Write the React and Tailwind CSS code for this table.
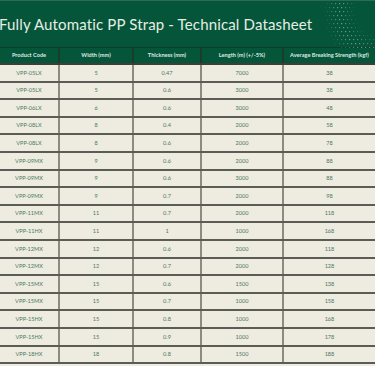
const rows = [
  ['VPP-05LX', '5', '0.47', '7000', '38'],
  ['VPP-05LX', '5', '0.6', '3000', '38'],
  ['VPP-06LX', '6', '0.6', '3000', '48'],
  ['VPP-08LX', '8', '0.4', '2000', '58'],
  ['VPP-08LX', '8', '0.6', '2000', '78'],
  ['VPP-09MX', '9', '0.6', '2000', '88'],
  ['VPP-09MX', '9', '0.6', '3000', '88'],
  ['VPP-09MX', '9', '0.7', '2000', '98'],
  ['VPP-11MX', '11', '0.7', '2000', '118'],
  ['VPP-11HX', '11', '1', '1000', '168'],
  ['VPP-12MX', '12', '0.6', '2000', '118'],
  ['VPP-12MX', '12', '0.7', '2000', '128'],
  ['VPP-15MX', '15', '0.6', '1500', '138'],
  ['VPP-15MX', '15', '0.7', '1000', '158'],
  ['VPP-15HX', '15', '0.8', '1000', '168'],
  ['VPP-15HX', '15', '0.9', '1000', '178'],
  ['VPP-18HX', '18', '0.8', '1500', '188'],
];

const headers = ['Product Code', 'Width (mm)', 'Thickness (mm)', 'Length (m) (+/-5%)', 'Average Breaking Strength (kgf)'];

const cols = 'grid grid-cols-[60px_74px_68px_82px_91px]';

const Dots = () => {
  const dots = [];
  for (let r = 0; r < 12; r++) {
    for (let c = 0; c < 16; c++) {
      const x = 2 + c * 4 + (r % 2) * 2;
      const y = 2 + r * 4;
      const d = Math.hypot(x - 70, y - 10);
      const o = Math.max(0, 0.55 - Math.abs(d - 40) / 30);
      if (o > 0.05) dots.push(<rect key={r + '-' + c} x={x} y={y} width="1.2" height="1.2" fill="#cfe3d6" opacity={o} />);
    }
  }
  return (
    <svg width="66" height="47" className="absolute right-0 top-0">
      {dots}
    </svg>
  );
};

export default function App() {
  return (
    <div className="w-[375px] h-[366px] overflow-hidden bg-[#eeebe1]" style={{ fontFamily: 'Lato, "Open Sans", sans-serif' }}>
      <div className="relative h-[47px] bg-[#04553a] border-t border-[#2f6b52] flex items-center">
        <h1 className="ml-[-1px] whitespace-nowrap text-[15px] leading-none text-[#e6eee4] tracking-[0.15px]">
          Fully Automatic PP Strap - Technical Datasheet
        </h1>
        <Dots />
      </div>
      <div className={`${cols} h-[18px] bg-[#04553a] border-t border-[#0b3f2b] border-b-2 border-b-[#3b3f38]`}>
        {headers.map((h, i) => (
          <div key={i} className="flex items-center justify-center border-r-2 border-[#1b3b2c] last:border-r-0 text-[5.6px] font-bold text-[#dfe9e0] whitespace-nowrap">
            {h}
          </div>
        ))}
      </div>
      {rows.map((r, i) => (
        <div key={i} className={`${cols} h-[17.6px] border-b-2 border-[#5c5c56]`}>
          {r.map((v, j) => (
            <div key={j} className="flex items-center justify-center border-r-2 border-[#8c8a82] last:border-r-0 text-[5.6px] text-[#4c7a60]">
              {v}
            </div>
          ))}
        </div>
      ))}
    </div>
  );
}
